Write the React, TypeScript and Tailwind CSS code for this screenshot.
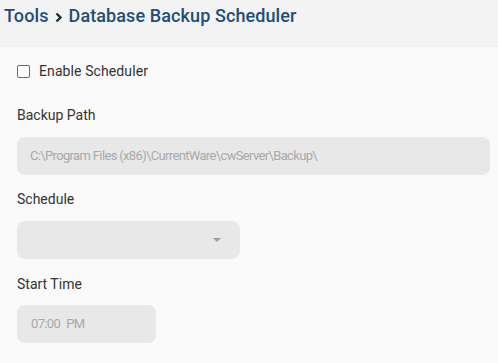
export default function App() {
    return (
        <div className="w-[498px] h-[363px] bg-[#fafafa] font-['Roboto',sans-serif] overflow-hidden">
            <header className="h-[47px] bg-[#f3f3f3] pl-[4px] pt-[4px]">
                <h1 className="flex items-center text-[18px] leading-[24px] font-medium tracking-[0.1px] text-[#1f4e78]">
                    <span>Tools</span>
                    <svg className="mx-[6px] mt-[2px]" width="8" height="11" viewBox="0 0 8 11" fill="none">
                        <path d="M1.5 1.5 L5.5 5.5 L1.5 9.5" stroke="#1e2d3a" strokeWidth="2.4" />
                    </svg>
                    <span>Database Backup Scheduler</span>
                </h1>
            </header>

            <div className="px-[17px] pt-[14px]">
                <label className="flex items-center h-[20px] gap-[9px] text-[14px] leading-[20px] tracking-[0.1px] text-[#333]">
                    <span className="w-[13px] h-[13px] rounded-[2px] border border-[#6b6b6b] bg-white" />
                    Enable Scheduler
                </label>

                <div className="mt-[24px] text-[14px] leading-[20px] text-[#333]">Backup Path</div>
                <div className="mt-[12px] h-[38px] w-[473px] rounded-[8px] bg-[#e8e8e8] flex items-center pl-[13px] text-[13px] tracking-[-0.65px] text-[#a8a8a8]">
                    C:\Program Files (x86)\CurrentWare\cwServer\Backup\
                </div>

                <div className="mt-[14px] text-[14px] leading-[20px] text-[#333]">Schedule</div>
                <div className="mt-[12px] h-[38px] w-[223px] rounded-[8px] bg-[#e8e8e8] flex items-center justify-end pr-[19px]">
                    <svg width="8" height="4" viewBox="0 0 8 4">
                        <path d="M0 0 H8 L4 4 Z" fill="#9e9e9e" />
                    </svg>
                </div>

                <div className="mt-[15px] text-[14px] leading-[20px] text-[#333]">Start Time</div>
                <div className="mt-[11px] h-[38px] w-[139px] rounded-[8px] bg-[#e8e8e8] flex items-center pl-[14px] text-[13px] tracking-[-0.65px] text-[#a8a8a8]">
                    <span>07:00</span>
                    <span className="ml-[6px]">PM</span>
                </div>
            </div>
        </div>
    );
}
